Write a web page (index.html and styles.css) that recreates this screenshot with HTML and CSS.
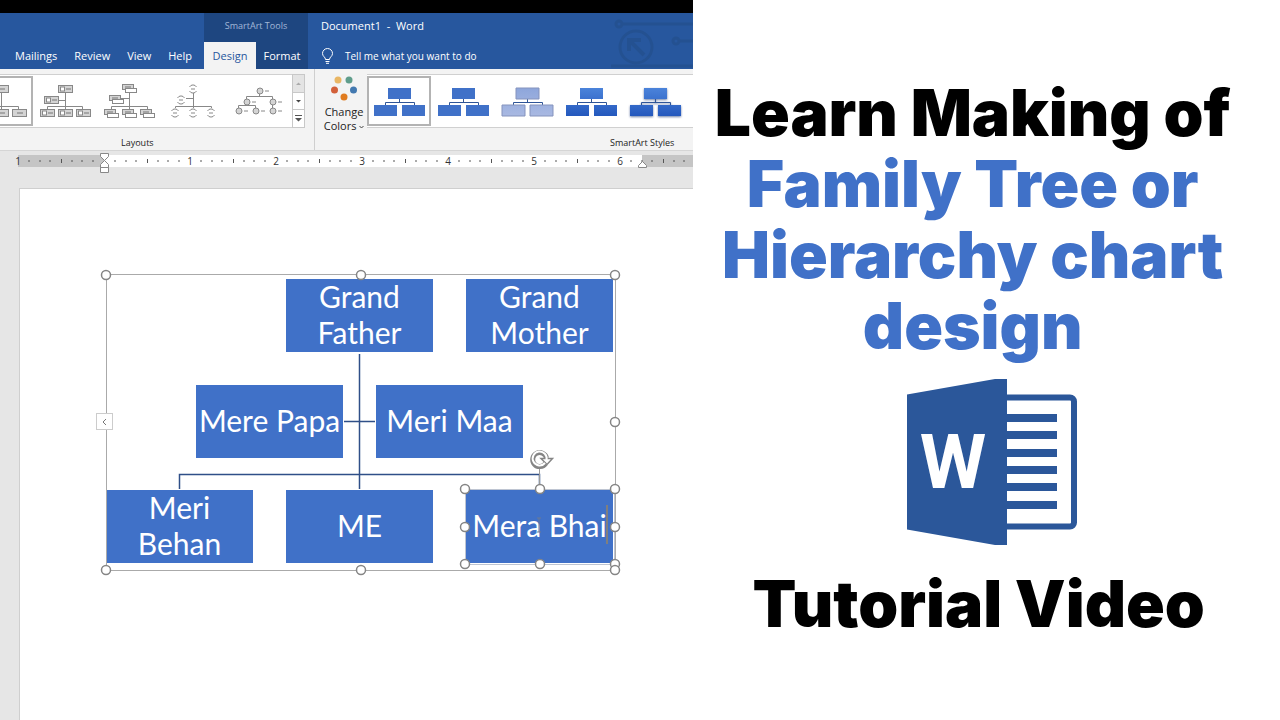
FILE: index.html
```
<!DOCTYPE html>
<html lang="en">
<head>
    <meta charset="UTF-8">
    <meta name="viewport" content="width=device-width, initial-scale=1.0">
    <title>Family Tree Tutorial</title>
    <link rel="stylesheet" href="styles.css">
</head>
<body>
    <!-- shared icon parts -->
    <svg class="defs" aria-hidden="true">
        <symbol id="box" viewBox="0 0 15 8"><rect x=".5" y=".5" width="14" height="7" fill="#d4d4d4" stroke="#888"/><path d="M5 4h6" stroke="#777"/></symbol>
        <symbol id="pic" viewBox="0 0 15 8"><rect x=".5" y=".5" width="14" height="7" fill="#d4d4d4" stroke="#888"/><rect x="2.5" y="2" width="4" height="4" fill="#fff" stroke="#888"/><path d="M8 4h5" stroke="#777"/></symbol>
        <symbol id="pair" viewBox="0 0 15 9"><rect x=".5" y=".5" width="11" height="5" fill="#d4d4d4" stroke="#888"/><path d="M3 3h6" stroke="#777"/><rect x="3.5" y="4.5" width="11" height="4" fill="#fff" stroke="#888"/></symbol>
        <symbol id="arc" viewBox="0 0 10 10"><path d="M1.500 3a4 4 0 0 1 7 0M1.500 7a4 4 0 0 0 7 0M3 5h4" fill="none" stroke="#888"/></symbol>
        <symbol id="dot" viewBox="0 0 14 8"><circle cx="4" cy="4" r="3" fill="#d4d4d4" stroke="#888"/><path d="M9 4h4" stroke="#888"/></symbol>
        <symbol id="org" viewBox="0 0 64 50"><path d="M32.500 23v3.500M18.500 29v-2.500h29V29" fill="none" stroke="#2f5597"/><path d="M21 12h23v11H21zM7 29h23v11H7zM35 29h23v11H35z"/></symbol>
        <linearGradient id="shine" x2="0" y2="1"><stop stop-color="#4b83da"/><stop offset="1" stop-color="#2458bd"/></linearGradient>
        <linearGradient id="pale" x2="0" y2="1"><stop stop-color="#8ea6db"/><stop offset="1" stop-color="#a9b9e2"/></linearGradient>
    </svg>

    <main class="container">
        <section class="word">
            <div class="letterbox"></div>

            <header class="titlebar">
                <svg class="circuit" width="82" height="56" viewBox="0 0 82 56" aria-hidden="true">
                    <g fill="none" stroke="#20497f" stroke-width="3">
                        <circle cx="8" cy="11" r="3"/><path d="M12 11h70M0 53h82" />
                        <circle cx="25" cy="34" r="16"/>
                        <circle cx="65" cy="28" r="3"/><path d="M69 28h13"/>
                        <path d="M33 42 19 28M18 38V27h12" stroke-width="4"/>
                    </g>
                </svg>
                <nav class="tabs">
                    <a href="#">Mailings</a>
                    <a href="#">Review</a>
                    <a href="#">View</a>
                    <a href="#">Help</a>
                </nav>
                <div class="context">
                    <span class="context-label">SmartArt Tools</span>
                    <nav class="context-tabs">
                        <a href="#" class="active">Design</a>
                        <a href="#">Format</a>
                    </nav>
                </div>
                <div class="doc">
                    <span class="doc-name">Document1&nbsp; -&nbsp; Word</span>
                    <a href="#" class="tell">
                        <svg width="13" height="16" viewBox="0 0 13 16" fill="none" stroke="#fff"><path d="M4.500 11.500C4.500 9 1.500 8.500 1.500 5.500a5 5 0 0 1 10 0C11.500 8.500 8.500 9 8.500 11.500zM4.500 13.500h4M5 15.300h3"/></svg>
                        Tell me what you want to do
                    </a>
                </div>
            </header>

            <div class="ribbon">
                <div class="group layouts">
                    <div class="group-body">
                        <div class="gallery">
                            <button class="item selected" aria-label="Organization Chart">
                                <svg viewBox="0 0 64 50"><path d="M32.500 16v17M14.500 33v-2.500h35V33" fill="none" stroke="#888"/><use href="#box" x="25" y="9" width="15" height="8"/><use href="#box" x="7" y="33" width="15" height="8"/><use href="#box" x="25" y="33" width="15" height="8"/><use href="#box" x="43" y="33" width="15" height="8"/></svg>
                            </button>
                            <button class="item" aria-label="Picture Organization Chart">
                                <svg viewBox="0 0 64 50"><path d="M32.500 16v17M26 24.500h6M14.500 33v-2.500h35V33" fill="none" stroke="#888"/><use href="#pic" x="25" y="9" width="15" height="8"/><use href="#pic" x="11" y="20" width="15" height="8"/><use href="#pic" x="7" y="33" width="15" height="8"/><use href="#pic" x="25" y="33" width="15" height="8"/><use href="#pic" x="43" y="33" width="15" height="8"/></svg>
                            </button>
                            <button class="item" aria-label="Name and Title Organization Chart">
                                <svg viewBox="0 0 64 50"><path d="M32.500 16v17M24 22.500h8M14.500 33v-2.500h36V33" fill="none" stroke="#888"/><use href="#pair" x="25" y="8" width="15" height="9"/><use href="#pair" x="12" y="19" width="15" height="9"/><use href="#pair" x="7" y="33" width="15" height="9"/><use href="#pair" x="25" y="33" width="15" height="9"/><use href="#pair" x="43" y="33" width="15" height="9"/></svg>
                            </button>
                            <button class="item" aria-label="Half Circle Organization Chart">
                                <svg viewBox="0 0 64 50"><path d="M32.500 17v15M25 22.500h7M14.500 32v-1.500h36V32" fill="none" stroke="#888"/><use href="#arc" x="27" y="8" width="10" height="10"/><use href="#arc" x="15" y="19" width="10" height="10"/><use href="#arc" x="9" y="32" width="10" height="10"/><use href="#arc" x="27" y="32" width="10" height="10"/><use href="#arc" x="45" y="32" width="10" height="10"/></svg>
                            </button>
                            <button class="item" aria-label="Circle Picture Hierarchy">
                                <svg viewBox="0 0 64 50"><path d="M34.500 18v2.500M21.500 23v-2.500h26V34M21.500 28v2M13.500 32v-2.500h17V32" fill="none" stroke="#888"/><use href="#dot" x="31" y="11" width="14" height="8"/><use href="#dot" x="18" y="22" width="14" height="8"/><use href="#dot" x="44" y="22" width="14" height="8"/><use href="#dot" x="10" y="31" width="14" height="8"/><use href="#dot" x="27" y="31" width="14" height="8"/><use href="#dot" x="44" y="31" width="14" height="8"/></svg>
                            </button>
                        </div>
                        <div class="scroller">
                            <button class="off" aria-label="Up"><svg width="7" height="7" viewBox="0 0 7 7"><path d="M1 5h5L3.500 2.500z" fill="#aaa"/></svg></button>
                            <button aria-label="Down"><svg width="7" height="7" viewBox="0 0 7 7"><path d="M1 2h5L3.500 4.500z" fill="#444"/></svg></button>
                            <button aria-label="More"><svg width="7" height="7" viewBox="0 0 7 7"><path d="M0 0h7v1H0zM0 3h7L3.500 6.500z" fill="#555"/></svg></button>
                        </div>
                    </div>
                    <span class="group-label">Layouts</span>
                </div>

                <div class="group styles">
                    <div class="group-body">
                        <button class="colors">
                            <svg width="26" height="26" viewBox="0 0 26 26"><circle cx="7" cy="5" r="3.500" fill="#e9b664"/><circle cx="18" cy="5" r="3.500" fill="#5f9d8b"/><circle cx="3.500" cy="15" r="3.500" fill="#d2603a"/><circle cx="22.500" cy="15" r="3.500" fill="#4379b0"/><circle cx="13" cy="22" r="3.500" fill="#e07b1f"/></svg>
                            <span>Change</span>
                            <span>Colors <svg width="5" height="5" viewBox="0 0 5 5"><path d="M.5 1l2 2 2-2" fill="none" stroke="#444"/></svg></span>
                        </button>
                        <div class="gallery">
                            <button class="item selected" aria-label="Simple Fill"><svg viewBox="0 0 64 50" fill="#4071c8"><use href="#org"/></svg></button>
                            <button class="item" aria-label="White Outline"><svg viewBox="0 0 64 50" fill="#4071c8"><use href="#org"/></svg></button>
                            <button class="item" aria-label="Subtle Effect"><svg viewBox="0 0 64 50" fill="url(#pale)" stroke="#8593bd"><use href="#org"/></svg></button>
                            <button class="item" aria-label="Moderate Effect"><svg viewBox="0 0 64 50" fill="url(#shine)"><use href="#org"/></svg></button>
                            <button class="item deep" aria-label="Intense Effect"><svg viewBox="0 0 64 50" fill="url(#shine)"><use href="#org"/></svg></button>
                        </div>
                    </div>
                    <span class="group-label">SmartArt Styles</span>
                </div>
            </div>

            <div class="ruler">
                <svg width="100%" height="37">
                    <!-- one inch is 86px -->
                    <pattern id="inch" x="18" width="86" height="37" patternUnits="userSpaceOnUse">
                        <path d="M10 10h2M21 10h2M31 10h2M53 10h2M63 10h2M74 10h2" stroke="#555"/>
                        <path d="M43.500 8v4" stroke="#555"/>
                    </pattern>
                    <rect x="18" y="4" width="100%" height="12" fill="#c5c5c5"/>
                    <rect x="104" y="4" width="538" height="12" fill="#fff"/>
                    <rect x="18" width="100%" height="37" fill="url(#inch)"/>
                    <g class="inches">
                        <text x="18" y="14">1</text>
                        <text x="190" y="14">1</text>
                        <text x="276" y="14">2</text>
                        <text x="362" y="14">3</text>
                        <text x="448" y="14">4</text>
                        <text x="534" y="14">5</text>
                        <text x="620" y="14">6</text>
                    </g>
                    <g fill="#fff" stroke="#888">
                        <path d="M100.500 2.500h8v3l-4 4-4-4zM100.500 16.500v-3l4-4 4 4v3zM100.500 16.500h8v5h-8z"/>
                        <path d="M638.500 16.500v-2l4-4 4 4v2z"/>
                    </g>
                </svg>
            </div>

            <div class="page">
                <div class="chart">
                    <svg class="lines" viewBox="90 265 540 320">
                        <path d="M359.500 354v135M344 421.500h31M179.500 489v-14.500h360V489" fill="none" stroke="#2f4f88" stroke-width="1.500"/>
                    </svg>

                    <div class="node grand-father">Grand Father</div>
                    <div class="node grand-mother">Grand Mother</div>
                    <div class="node papa">Mere Papa</div>
                    <div class="node maa">Meri Maa</div>
                    <div class="node behan">Meri Behan</div>
                    <div class="node me">ME</div>
                    <div class="node bhai">Mera Bhai</div>

                    <svg class="lines" viewBox="90 265 540 320">
                        <path d="M106.500 274.500h509v296h-509z" fill="none" stroke="#aaa"/>
                        <path d="M465.500 489.500h149v75h-149z" fill="none" stroke="#7d8ba5" stroke-dasharray="1 1"/>
                        <path d="M539.500 467v20" stroke="#999"/>
                        <path d="M607 505v39" stroke="#7f7f7f" stroke-width="2"/>
                        <path d="M537 518h4M539 518v14M537 532h4" stroke="#6b7a94"/>
                        <g fill="#fff" stroke="#858585" stroke-width="1.500">
                            <circle cx="106" cy="275" r="4.500"/>
                            <circle cx="361" cy="275" r="4.500"/>
                            <circle cx="615" cy="275" r="4.500"/>
                            <circle cx="615" cy="422" r="4.500"/>
                            <circle cx="106" cy="570" r="4.500"/>
                            <circle cx="361" cy="570" r="4.500"/>
                            <circle cx="465" cy="489" r="4.500"/>
                            <circle cx="540" cy="489" r="4.500"/>
                            <circle cx="615" cy="489" r="4.500"/>
                            <circle cx="465" cy="527" r="4.500"/>
                            <circle cx="615" cy="527" r="4.500"/>
                            <circle cx="465" cy="564" r="4.500"/>
                            <circle cx="540" cy="564" r="4.500"/>
                            <circle cx="615" cy="564" r="4.500"/>
                            <circle cx="615" cy="570" r="4.500"/>
                        </g>
                        <!-- rotate handle -->
                        <path d="M545.500 463.500a7 7 0 1 1 1-5.500" fill="none" stroke="#858585" stroke-width="5"/>
                        <path d="M541 458.500h11.500l-5.500 6z" fill="#fff" stroke="#858585" stroke-width="1.500"/>
                        <path d="M545 463a7 7 0 1 1 1.500-3" fill="none" stroke="#fff" stroke-width="2"/>
                    </svg>
                    <button class="pane" aria-label="Text pane"><svg width="5" height="8" viewBox="0 0 5 8"><path d="M4 1 1 4l3 3" fill="none" stroke="#777"/></svg></button>
                </div>
            </div>
        </section>

        <section class="promo">
            <h1>Learn Making of<br><span>Family Tree or<br>Hierarchy chart<br>design</span></h1>
            <svg class="logo" width="170" height="167" viewBox="0 0 170 167" role="img" aria-label="Word">
                <rect x="80" y="18.500" width="87" height="129" rx="4" fill="#fff" stroke="#2b579a" stroke-width="6"/>
                <path d="M100 35h50v8h-50zM100 52h50v8h-50zM100 70h50v8h-50zM100 87h50v8h-50zM100 104h50v8h-50zM100 122h50v8h-50z" fill="#2b579a"/>
                <path d="M0 15.500 88 0h12v166H88L0 150.500z" fill="#2b579a"/>
                <text x="46" y="109">W</text>
            </svg>
            <h2>Tutorial Video</h2>
        </section>
    </main>
</body>
</html>
```
FILE: styles.css
```
* { box-sizing: border-box; }

body {
    margin: 0;
    background: #fff;
    font-family: "Open Sans", "Noto Sans", sans-serif;
    font-size: 11px;
    color: #222;
}

a { color: inherit; text-decoration: none; }

button {
    padding: 0;
    border: 0;
    background: none;
    font: inherit;
    color: inherit;
}

.defs { position: absolute; width: 0; height: 0; }

.container {
    display: grid;
    grid-template-columns: 13fr 11fr;
    min-height: 100vh;
}

.word {
    display: flex;
    flex-direction: column;
    min-width: 0;
    overflow: hidden;
    background: #e6e6e6;
}

.letterbox { height: 13px; background: #000; }

/* title bar */
.titlebar {
    position: relative;
    display: flex;
    height: 56px;
    background: #27579e;
    color: #fff;
    white-space: nowrap;
}

.circuit { position: absolute; top: 0; right: 0; opacity: .4; }

.tabs {
    display: flex;
    justify-content: space-between;
    align-items: flex-end;
    width: 204px;
    padding: 0 12px 0 15px;
    line-height: 27px;
}

.context {
    display: flex;
    flex-direction: column;
    width: 104px;
    background: #1e4680;
}

.context-label {
    height: 29px;
    font-size: 9px;
    line-height: 26px;
    text-align: center;
    color: #a3b8d8;
}

.context-tabs { display: flex; line-height: 27px; text-align: center; }
.context-tabs a { flex: 1; }
.context-tabs .active { background: #f3f3f3; color: #27579e; }

.doc { display: flex; flex-direction: column; padding-left: 13px; }
.doc-name { height: 29px; line-height: 26px; }

.tell {
    display: flex;
    align-items: center;
    gap: 11px;
    height: 27px;
    font-size: 10px;
}

/* ribbon */
.ribbon {
    display: flex;
    height: 82px;
    background: #f3f3f3;
    border-bottom: 1px solid #d5d5d5;
}

.group { display: flex; flex-direction: column; padding-top: 5px; }
.group-body { flex: none; display: flex; height: 54px; }

.layouts { flex: none; width: 315px; border-right: 1px solid #cfcfcf; }
.layouts .group-label { padding-left: 121px; }
.layouts .gallery { width: 292px; justify-content: flex-end; padding-right: 3px; }

.styles { flex: 1; min-width: 0; padding-left: 6px; }
.styles .group-label { padding-right: 19px; text-align: right; }
.styles .gallery { flex: 1; }

.group-label { margin-top: auto; font-size: 9px; line-height: 14px; }

.gallery {
    display: flex;
    align-items: center;
    overflow: hidden;
    background: #fff;
    border: solid #d0d0d0;
    border-width: 1px 0;
}

.item { flex: none; width: 64px; height: 50px; }
.item svg { display: block; width: 64px; height: 50px; }
.selected { outline: 2px solid #b3b3b3; outline-offset: -2px; }
.deep { filter: drop-shadow(0 1px 1px #6b7fa8); }

.scroller {
    display: flex;
    flex-direction: column;
    width: 13px;
    border: 1px solid #c8c8c8;
    background: #fff;
}

.scroller button { flex: 1; display: flex; align-items: center; justify-content: center; }
.scroller button + button { border-top: 1px solid #c8c8c8; }
.scroller .off { background: #e4e4e4; }

.colors {
    display: flex;
    flex-direction: column;
    align-items: center;
    width: 46px;
    height: 60px;
    line-height: 14px;
    white-space: nowrap;
}

.colors > svg { flex: none; margin: 1px 0 4px; }

/* ruler and page */
.ruler { height: 37px; }
.ruler svg { display: block; }
.inches { font-size: 10px; text-anchor: middle; fill: #333; }

.page {
    flex: 1;
    margin-left: 19px;
    padding: 76px 0 0 70px;
    background: #fff;
    border: solid #cfcfcf;
    border-width: 1px 0 0 1px;
}

.chart { position: relative; width: 540px; height: 320px; }
.lines { position: absolute; top: 0; left: 0; width: 540px; height: 320px; }

.node {
    position: absolute;
    display: flex;
    align-items: center;
    justify-content: center;
    width: 147px;
    height: 73px;
    padding-bottom: 4px;
    background: #4071c8;
    color: #fff;
    font-family: Lato, sans-serif;
    font-size: 30px;
    line-height: 36px;
    text-align: center;
}

.grand-father { left: 196px; top: 14px; }
.grand-mother { left: 376px; top: 14px; }
.papa { left: 106px; top: 120px; }
.maa { left: 286px; top: 120px; }
.behan { left: 16px; top: 225px; }
.me { left: 196px; top: 225px; }
.bhai { left: 376px; top: 225px; }

.pane {
    position: absolute;
    left: 6px;
    top: 148px;
    display: flex;
    align-items: center;
    justify-content: center;
    width: 17px;
    height: 17px;
    background: #fff;
    border: 1px solid #ccc;
}

/* right side */
.promo {
    display: flex;
    flex-direction: column;
    align-items: center;
    justify-content: center;
    padding: 0 28px 4px 0;
    background: #fff;
    color: #000;
    font-family: Inter, sans-serif;
    text-align: center;
    white-space: nowrap;
}

h1, h2 {
    margin: 0;
    font-size: 64px;
    font-weight: 900;
    line-height: 71px;
}

h1 span { color: #4071c8; }
h2 { margin-left: 12px; }

.logo { margin: 18px 0 22px 38px; }
.logo text {
    font-family: Roboto, sans-serif;
    font-size: 76px;
    font-weight: 700;
    text-anchor: middle;
    fill: #fff;
}
```
